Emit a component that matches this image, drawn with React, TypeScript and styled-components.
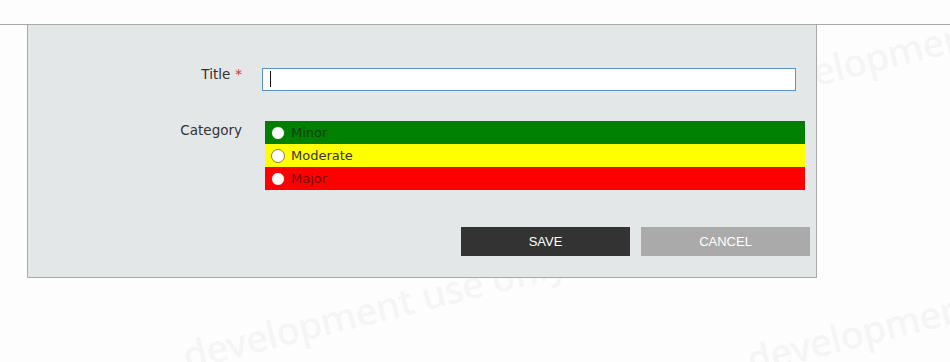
import React from "react";
import styled, { createGlobalStyle } from "styled-components";

const GlobalStyle = createGlobalStyle`
  html, body { margin: 0; padding: 0; background: #fdfdfd; }
  body { font-family: "DejaVu Sans", Verdana, sans-serif; }
  * { box-sizing: border-box; }
`;

const Page = styled.div`
  position: relative;
  width: 950px;
  height: 362px;
  overflow: hidden;
  background: #fdfdfd;
`;

const WatermarkLayer = styled.div`
  position: absolute;
  inset: 0;
  z-index: 0;
  pointer-events: none;
`;

const Watermark = styled.span`
  position: absolute;
  font-family: "Open Sans", "DejaVu Sans", sans-serif;
  font-size: 38px;
  font-weight: 600;
  letter-spacing: -0.6px;
  color: rgba(0, 0, 0, 0.055);
  white-space: nowrap;
  transform-origin: left bottom;
  transform: rotate(-14deg);
  line-height: 1;
`;

const Content = styled.div`
  position: relative;
  z-index: 1;
`;

const TopBar = styled.div`
  height: 25px;
  border-bottom: 1px solid #a9a9a9;
`;

const Panel = styled.div`
  margin-left: 27px;
  width: 790px;
  background: #e4e7e8;
  border: 1px solid #a9a9a9;
  border-top: none;
  padding: 43px 6px 21px 0;
`;

const Form = styled.div`
  display: grid;
  grid-template-columns: 214px 1fr;
  column-gap: 20px;
  row-gap: 30px;
`;

const Label = styled.label<{ $offset: number }>`
  justify-self: end;
  align-self: start;
  margin-top: ${(p) => p.$offset}px;
  font-size: 13.5px;
  line-height: 15px;
  color: #333;
`;

const Required = styled.span`
  color: #e0302a;
  margin-left: 5px;
`;

const InputWrap = styled.div`
  position: relative;
  width: 534px;
  height: 23px;
`;

const TextInput = styled.input`
  width: 100%;
  height: 100%;
  border: 1px solid #5a93c6;
  background: #fff;
  padding: 0 7px;
  font-family: "DejaVu Sans", sans-serif;
  font-size: 13px;
  outline: none;
`;

const Caret = styled.span`
  position: absolute;
  left: 8px;
  top: 3px;
  width: 1px;
  height: 16px;
  background: #111;
`;

const RadioGroup = styled.div`
  margin-left: 3px;
  width: 540px;
  display: flex;
  flex-direction: column;
`;

const RadioRow = styled.label<{ $bg: string; $fg: string }>`
  display: flex;
  align-items: center;
  gap: 6px;
  height: 23px;
  padding-left: 6px;
  background: ${(p) => p.$bg};
  color: ${(p) => p.$fg};
  font-size: 13px;
`;

const Radio = styled.input<{ $ring: string }>`
  appearance: none;
  -webkit-appearance: none;
  margin: 1px 0 0;
  width: 14px;
  height: 14px;
  border-radius: 50%;
  background: #fff;
  border: 1px solid ${(p) => p.$ring};
`;

const ButtonRow = styled.div`
  margin-top: 37px;
  display: flex;
  justify-content: flex-end;
  gap: 11px;
`;

const Button = styled.button<{ $bg: string }>`
  width: 169px;
  height: 29px;
  border: none;
  background: ${(p) => p.$bg};
  color: #fff;
  font-family: "Liberation Sans", Arial, sans-serif;
  font-size: 13px;
  text-transform: uppercase;
  cursor: pointer;
`;

const categories = [
  { name: "Minor", bg: "#008000", fg: "#0f3f10", ring: "#0a7a0a" },
  { name: "Moderate", bg: "#ffff00", fg: "#333333", ring: "#8a7d3a" },
  { name: "Major", bg: "#ff0000", fg: "#7a0a0a", ring: "#f20000" },
];

const marks = [
  { left: 188, top: 336 },
  { left: 752, top: 340 },
  { left: 755, top: 68 },
  { left: -390, top: 318 },
];

export default function App() {
  return (
    <>
      <GlobalStyle />
      <Page>
        <WatermarkLayer>
          {marks.map((m, i) => (
            <Watermark key={i} style={{ left: m.left, top: m.top }}>
              development use only
            </Watermark>
          ))}
        </WatermarkLayer>
        <Content>
          <TopBar />
          <Panel>
            <Form>
              <Label $offset={-1} htmlFor="title">
                Title<Required>*</Required>
              </Label>
              <InputWrap>
                <TextInput id="title" type="text" />
                <Caret />
              </InputWrap>
              <Label $offset={2}>Category</Label>
              <RadioGroup>
                {categories.map((c) => (
                  <RadioRow key={c.name} $bg={c.bg} $fg={c.fg}>
                    <Radio type="radio" name="category" $ring={c.ring} />
                    {c.name}
                  </RadioRow>
                ))}
              </RadioGroup>
            </Form>
            <ButtonRow>
              <Button $bg="#333333">Save</Button>
              <Button $bg="#aaaaaa">Cancel</Button>
            </ButtonRow>
          </Panel>
        </Content>
      </Page>
    </>
  );
}
